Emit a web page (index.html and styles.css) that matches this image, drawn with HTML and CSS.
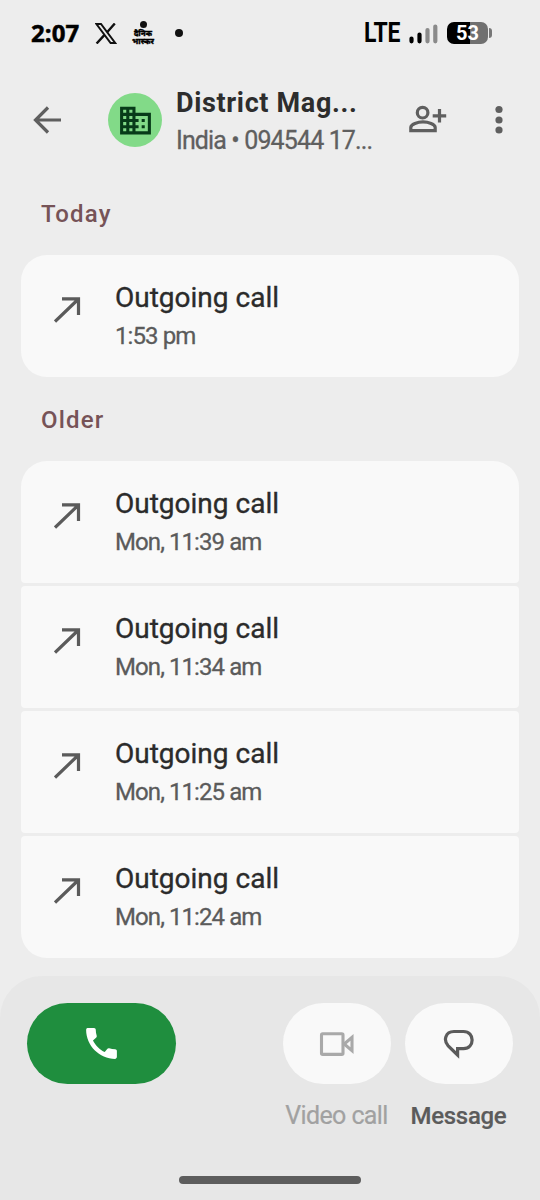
FILE: index.html
```html
<!DOCTYPE html>
<html lang="en">
<head>
<meta charset="utf-8">
<title>Call history</title>
<link rel="stylesheet" href="styles.css">
</head>
<body>
<div class="screen">
  <div class="status">
    <span class="clock">2:07</span>
    <svg class="x-logo" width="22" height="21" viewBox="0 0 22 21"><path d="M1.4 1H6L20.2 20H15.6Z" fill="none" stroke="#111" stroke-width="2"/><path d="M19.8 .5L12.1 9.3M9.3 12.1L1.6 20.5" stroke="#111" stroke-width="2.4"/></svg>
    <div class="paper"><i></i><span>दैनिक</span><span>भास्कर</span></div>
    <i class="more-dot"></i>
    <span class="lte">LTE</span>
    <svg class="signal" width="29" height="22" viewBox="0 0 29 22"><g stroke-width="4.2" stroke-linecap="round"><path d="M2.5 14.5V17.3M10.5 10.5V17.3" stroke="#000"/><path d="M18.5 6V17.3M26.3 2.5V17.3" stroke="#8a8a8a"/></g></svg>
    <div class="battery"><span>53</span></div><i class="battery-tip"></i>
  </div>
  <header class="header">
    <svg class="back" width="40" height="40" viewBox="0 0 40 40"><path d="M34 20H8.5M21 7.5L8.5 20L21 32.5" fill="none" stroke="#5f5f5f" stroke-width="3.2"/></svg>
    <div class="avatar"><svg width="37" height="37" viewBox="0 0 24 24"><path fill="#073b19" d="M12 7V3H2v18h20V7H12zM6 19H4v-2h2v2zm0-4H4v-2h2v2zm0-4H4V9h2v2zm0-4H4V5h2v2zm4 12H8v-2h2v2zm0-4H8v-2h2v2zm0-4H8V9h2v2zm0-4H8V5h2v2zm10 12h-8v-2h2v-2h-2v-2h2v-2h-2V9h8v10zm-2-8h-2v2h2v-2zm0 4h-2v2h2v-2z"/></svg></div>
    <div class="who"><div class="name">District Mag...</div><div class="number">India • 094544 17...</div></div>
    <svg class="add" width="40" height="30" viewBox="0 0 40 30"><g fill="none" stroke="#5f5f5f" stroke-width="3.2"><circle cx="13.6" cy="7.7" r="5.3"/><path d="M1.8 25.7V22.4C1.8 19.1 8.8 16.9 14 16.9S26.2 19.1 26.2 22.4V25.7ZM30.5 4V17.6M23.7 10.9H37.2"/></g></svg>
    <svg class="menu" width="8" height="30" viewBox="0 0 8 30"><g fill="#5f5f5f"><circle cx="4" cy="4.5" r="3.6"/><circle cx="4" cy="15" r="3.6"/><circle cx="4" cy="25" r="3.6"/></g></svg>
  </header>
  <main class="history">
    <h2 class="label">Today</h2>
    <div class="group">
      <div class="call"><svg class="out" width="28" height="28" viewBox="0 0 28 28"><path d="M1 25.5L24.5 3M8 2.8H24.5V19" fill="none" stroke="#5b5b5b" stroke-width="3.2"/></svg><div><div class="kind">Outgoing call</div><div class="time">1:53 pm</div></div></div>
    </div>
    <h2 class="label">Older</h2>
    <div class="group">
      <div class="call"><svg class="out" width="28" height="28" viewBox="0 0 28 28"><path d="M1 25.5L24.5 3M8 2.8H24.5V19" fill="none" stroke="#5b5b5b" stroke-width="3.2"/></svg><div><div class="kind">Outgoing call</div><div class="time">Mon, 11:39 am</div></div></div>
      <div class="call"><svg class="out" width="28" height="28" viewBox="0 0 28 28"><path d="M1 25.5L24.5 3M8 2.8H24.5V19" fill="none" stroke="#5b5b5b" stroke-width="3.2"/></svg><div><div class="kind">Outgoing call</div><div class="time">Mon, 11:34 am</div></div></div>
      <div class="call"><svg class="out" width="28" height="28" viewBox="0 0 28 28"><path d="M1 25.5L24.5 3M8 2.8H24.5V19" fill="none" stroke="#5b5b5b" stroke-width="3.2"/></svg><div><div class="kind">Outgoing call</div><div class="time">Mon, 11:25 am</div></div></div>
      <div class="call"><svg class="out" width="28" height="28" viewBox="0 0 28 28"><path d="M1 25.5L24.5 3M8 2.8H24.5V19" fill="none" stroke="#5b5b5b" stroke-width="3.2"/></svg><div><div class="kind">Outgoing call</div><div class="time">Mon, 11:24 am</div></div></div>
    </div>
  </main>
  <footer class="footer">
    <div class="actions">
      <div class="pill phone"><svg width="41" height="41" viewBox="0 0 24 24"><path fill="#fff" d="M20.01 15.38c-1.23 0-2.42-.2-3.53-.56-.35-.12-.74-.03-1.01.24l-1.57 1.97c-2.83-1.35-5.48-3.9-6.89-6.83l1.95-1.66c.27-.28.35-.67.24-1.02-.37-1.11-.56-2.3-.56-3.53 0-.54-.45-.99-.99-.99H4.19C3.65 3 3 3.24 3 3.99 3 13.28 10.73 21 20.01 21c.71 0 .99-.63.99-1.18v-3.45c0-.54-.45-.99-.99-.99z"/></svg></div>
      <div class="action video"><div class="pill"><svg width="36" height="26" viewBox="0 0 36 26"><g fill="none" stroke="#a9a9a9" stroke-width="3.1"><rect x="2.5" y="2.8" width="21.5" height="20.6" rx="1.2"/><path d="M25.2 13L33 6.4V19.6Z"/></g></svg></div><span>Video call</span></div>
      <div class="action message"><div class="pill"><svg width="32" height="32" viewBox="0 0 32 32"><path d="M14.6 27L5.2 17.8C.2 12.5 2.2 3.5 11 3.5H20.5C32 3.5 32 20.7 20.5 20.7H14.6Z" fill="none" stroke="#5b5b5b" stroke-width="3.2"/></svg></div><span>Message</span></div>
    </div>
    <div class="home"></div>
  </footer>
</div>
</body>
</html>
```
FILE: styles.css
```css
* { box-sizing: border-box; }
body { margin: 0; background: #ededed; font-family: Roboto, "Noto Sans", sans-serif; }
svg, i { display: block; flex: none; }
.screen { width: 540px; height: 1200px; display: flex; flex-direction: column; overflow: hidden; white-space: nowrap; }
.status { height: 66px; display: flex; align-items: center; padding-left: 31px; color: #000; }
.clock { width: 64px; font: 700 24px/24px "Open Sans", sans-serif; letter-spacing: 0.1px; -webkit-text-stroke: 0.5px #000; }
.x-logo { margin-top: 1px; }
.paper { width: 24px; margin-left: 14px; display: flex; flex-direction: column; align-items: center; font: 900 7.5px/8px "Noto Sans", sans-serif; -webkit-text-stroke: 0.3px #000; }
.paper i { width: 7px; height: 7px; border-radius: 50%; background: #111; margin-bottom: 1px; }
.more-dot { width: 8px; height: 8px; border-radius: 50%; background: #111; margin-left: 20px; }
.lte { width: 45px; margin-left: 181px; font: 700 27px/26px Roboto, sans-serif; letter-spacing: -0.3px; transform: scaleX(0.85); transform-origin: left; }
.signal { margin-top: 3px; }
.battery { width: 41px; height: 22px; margin-left: 9px; border-radius: 7px; background: linear-gradient(90deg, #000 55%, #707070 55%); color: #fff; text-align: center; font: 700 20px/22px Roboto, sans-serif; }
.battery-tip { width: 3px; height: 10px; margin-left: 1px; border-radius: 0 3px 3px 0; background: #777; }
.header { height: 108px; display: flex; align-items: center; padding-left: 27px; }
.avatar { width: 54px; height: 54px; margin-left: 41px; border-radius: 50%; background: #82da88; display: flex; align-items: center; justify-content: center; flex: none; }
.who { width: 234px; padding: 3px 0 0 14px; }
.name { font: 700 27px/38px Roboto, sans-serif; color: #2d2d2d; letter-spacing: 0.65px; }
.number { font-size: 25px; line-height: 38px; color: #5f5f5f; letter-spacing: -0.87px; -webkit-text-stroke: 0.3px #5f5f5f; }
.add { margin-left: 13px; }
.menu { margin-left: 46px; }
.history { padding: 0 21px; height: 802px; }
.label { margin: 0; height: 81px; padding-left: 20px; font: 500 24px/81px Roboto, sans-serif; letter-spacing: 1.2px; color: #765357; }
.label + .group + .label { height: 84.5px; line-height: 87px; }
.group { display: flex; flex-direction: column; gap: 3.5px; }
.call { height: 121.5px; background: #f9f9f9; border-radius: 4px; display: flex; padding: 23.5px 0 0 33px; }
.call:first-child { border-top-left-radius: 26px; border-top-right-radius: 26px; }
.call:last-child { border-bottom-left-radius: 26px; border-bottom-right-radius: 26px; }
.out { margin: 17px 33px 0 0; }
.kind { font-size: 28px; line-height: 38.5px; color: #2b2b2b; -webkit-text-stroke: 0.35px #2b2b2b; }
.time { font-size: 24px; line-height: 39px; color: #5b5b5b; letter-spacing: -0.92px; -webkit-text-stroke: 0.3px #5b5b5b; }
.footer { height: 224px; border-radius: 42px 42px 0 0; background: #e7e7e7; padding: 27px 27.5px 0 27px; }
.actions { display: flex; height: 173px; }
.pill { width: 108px; height: 81px; border-radius: 41px; background: #f9f9f9; display: flex; align-items: center; justify-content: center; }
.phone { width: 148.5px; background: #1f8e3e; }
.action { display: flex; flex-direction: column; align-items: center; width: 108px; }
.video { margin-left: 107px; color: #a1a1a1; }
.message { margin-left: 14px; color: #5b5b5b; }
.action span { font-size: 25px; line-height: 30px; margin-top: 17px; letter-spacing: -0.6px; -webkit-text-stroke: 0.2px currentColor; }
.action.message span { font-weight: 500; font-size: 24px; letter-spacing: -0.3px; }
.home { width: 182px; height: 8px; border-radius: 4px; margin-left: 152px; background: #5d5d5d; }
```
